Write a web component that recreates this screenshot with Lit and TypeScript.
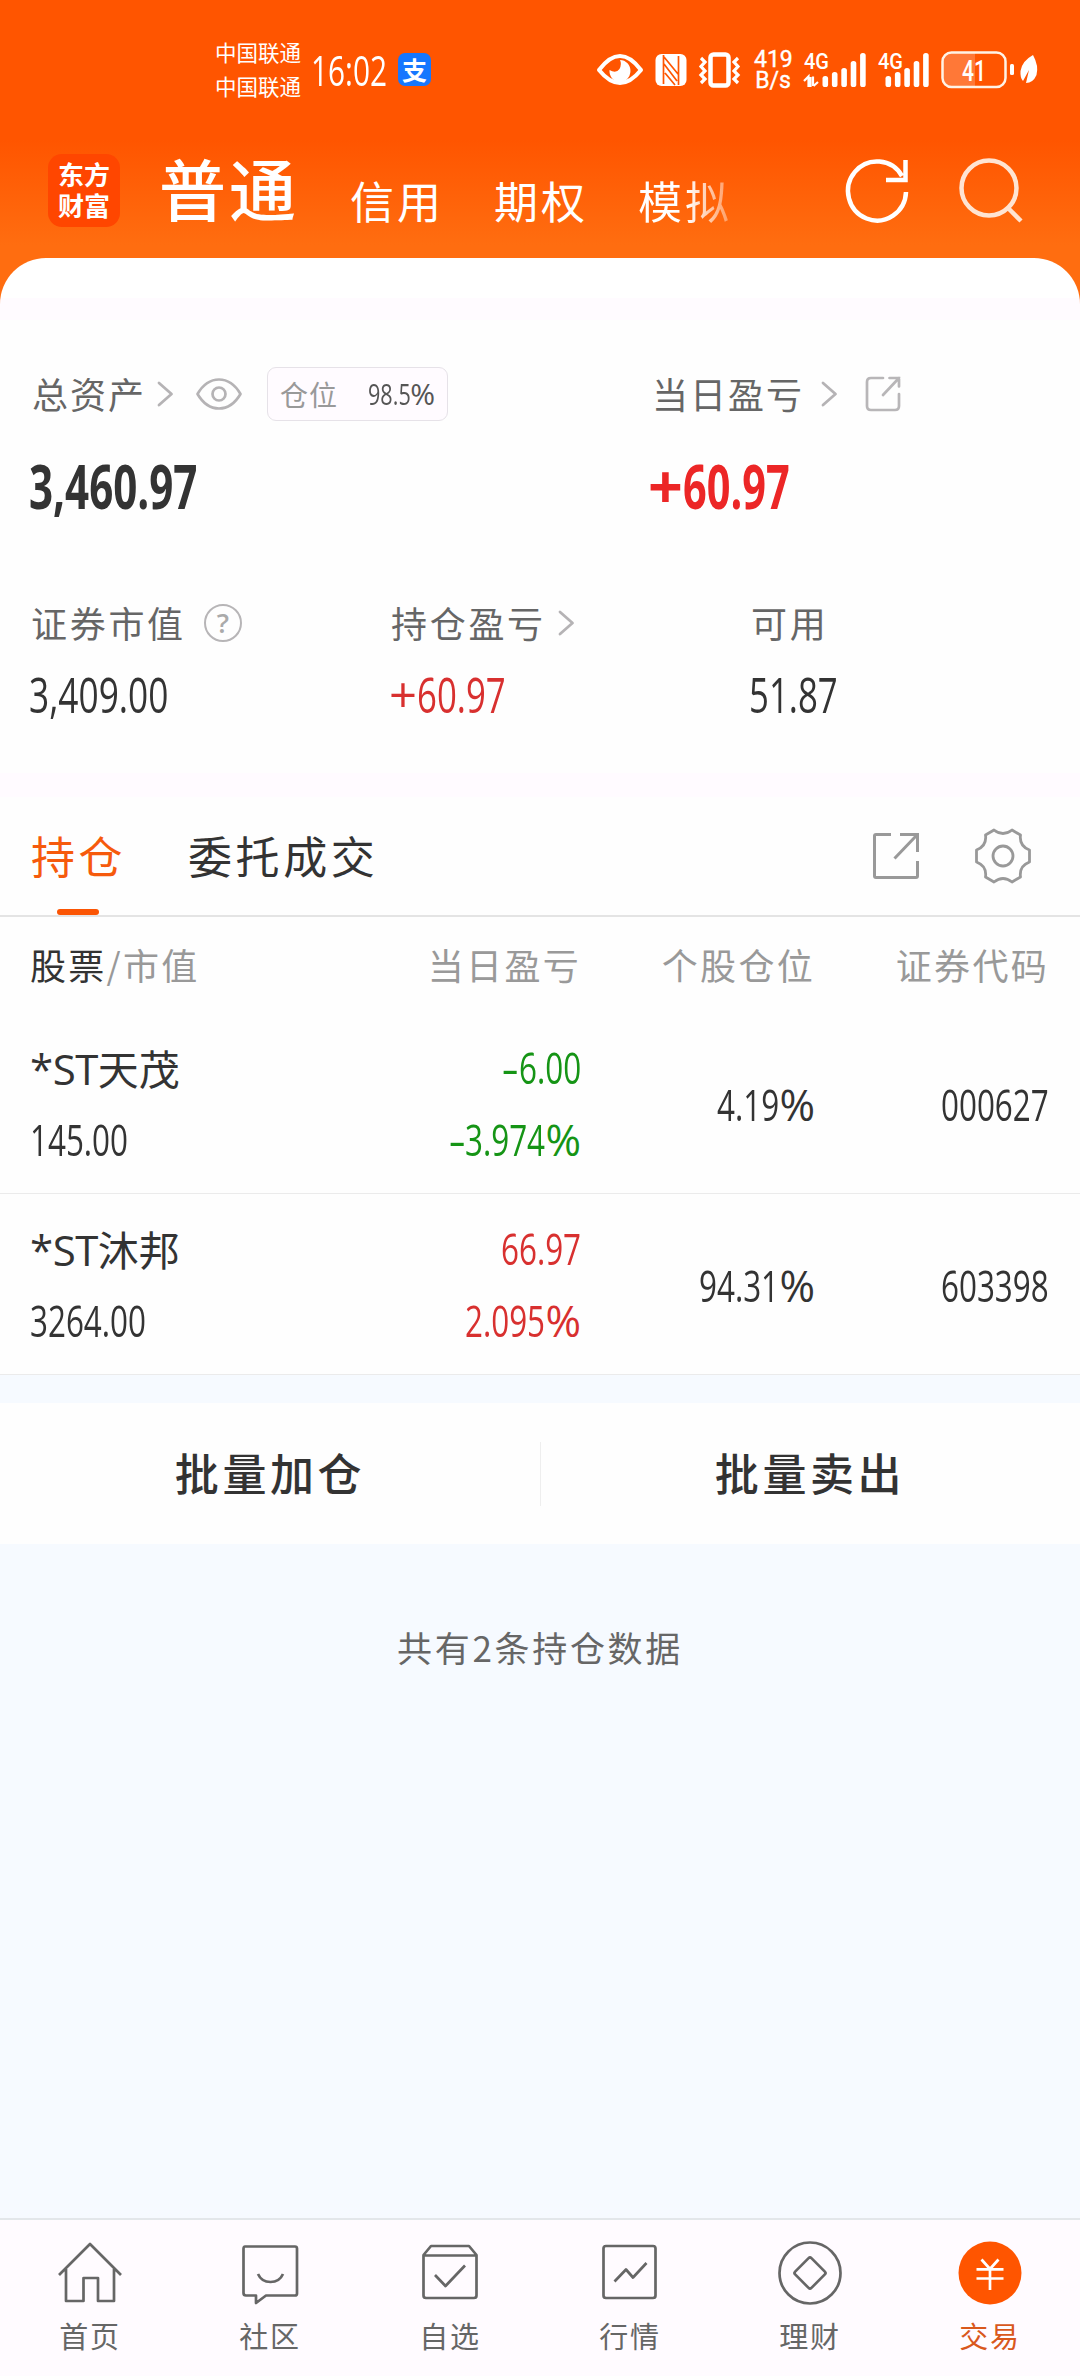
import { LitElement, html, css, svg, TemplateResult } from "lit";
import { customElement, property } from "lit/decorators.js";

/** Advance widths in em of the glyphs that are drawn condensed. */
const ADVANCE: Record<string, number> = { ".": 0.266, ",": 0.245, ":": 0.266 };

/** A figure whose digits are condensed while signs keep their full width. */
@customElement("slim-number")
export class SlimNumber extends LitElement {
  @property() value = "";
  @property({ type: Number }) ratio = 0.73;

  static styles = css`
    :host { display: inline-block; white-space: nowrap; font-family: "Open Sans", "Noto Sans", sans-serif; font-weight: 500; line-height: 1; }
    .run { display: inline-block; transform-origin: left center; }
    .minus { display: inline-block; transform: scaleX(1.25); transform-origin: right center; }
  `;

  render() {
    const runs = this.value.match(/[\d.,:]+|[^\d.,:]+/g) ?? [];
    return html`${runs.map((run) => {
      if (!/[\d]/.test(run)) return html`<span class=${run === "-" ? "minus" : ""}>${run}</span>`;
      const advance = [...run].reduce((sum, c) => sum + (ADVANCE[c] ?? 0.572), 0);
      return html`<span class="run" style="transform:scaleX(${this.ratio});margin-right:${(-advance * (1 - this.ratio)).toFixed(3)}em">${run}</span>`;
    })}`;
  }
}

const chevron = html`<svg class="chevron" width="18" height="28" viewBox="0 0 18 28" fill="none" stroke="#b5b3b5" stroke-width="2.8" stroke-linecap="round" stroke-linejoin="round"><path d="M3 3L15.500 14L3 25"/></svg>`;

const bars = (x: number) => svg`<g fill="#fff">
  <rect x=${x} y="24" width="5.600" height="11" rx="2.600"/><rect x=${x + 9.4} y="20" width="5.600" height="15" rx="2.600"/>
  <rect x=${x + 18.800} y="16" width="5.600" height="19" rx="2.600"/><rect x=${x + 28.200} y="9" width="5.600" height="26" rx="2.600"/>
  <rect x=${x + 37.600} y="1" width="5.600" height="34" rx="2.600"/></g>`;

interface Holding { name: string; value: string; gain: string; rate: string; up: boolean; share: string; code: string; }

const HOLDINGS: Holding[] = [
  { name: "*ST天茂", value: "145.00", gain: "-6.00", rate: "-3.974%", up: false, share: "4.19%", code: "000627" },
  { name: "*ST沐邦", value: "3264.00", gain: "66.97", rate: "2.095%", up: true, share: "94.31%", code: "603398" },
];

const NAV: { label: string; icon: TemplateResult; on?: boolean }[] = [
  { label: "首页", icon: html`<svg width="66" height="66" viewBox="0 0 66 66"><path d="M2 34L33 3L64 34M9 28V60H26.500V37H41V60H57V28"/></svg>` },
  { label: "社区", icon: html`<svg width="66" height="66" viewBox="0 0 66 66"><path d="M8 5.500H58Q60 5.500 60 7.500V52.500Q60 54.500 58 54.500H29L19 62V54.500H9Q6.500 54.500 6.500 52V8Q6.500 5.500 8 5.500ZM21 33Q24.500 41 33.500 41Q42.500 41 46 33"/></svg>` },
  { label: "自选", icon: html`<svg width="66" height="66" viewBox="0 0 66 66"><path d="M6.500 14L14 5H52L59.500 14V54.500Q59.500 57 57 57H9Q6.500 57 6.500 54.500ZM6.500 14.500H59.500M18 34L28.500 45L48 24.500"/></svg>` },
  { label: "行情", icon: html`<svg width="66" height="66" viewBox="0 0 66 66"><rect x="6.500" y="5" width="52" height="52" rx="2.500"/><path d="M17.500 40.500L29 28.500L36 36.500L49.500 22"/></svg>` },
  { label: "理财", icon: html`<svg width="66" height="66" viewBox="0 0 66 66"><circle cx="33" cy="32" r="30.500"/><rect x="21.500" y="20.500" width="23" height="23" rx="2" transform="rotate(45 33 32)"/></svg>` },
  { label: "交易", on: true, icon: html`<svg width="66" height="66" viewBox="0 0 66 66"><circle cx="33" cy="32" r="31.500" fill="#ff5500" stroke="none"/><path stroke="#fff" d="M24.500 18.500L33 28L41.500 18.500M19.500 28.300H46.500M19.500 37.500H46.500M33 28V49"/></svg>` },
];

@customElement("app-root")
export class AppRoot extends LitElement {
  static styles = css`
    :host { display: block; font-family: "Noto Sans CJK SC", sans-serif; color: #333; line-height: 1; }
    * { box-sizing: border-box; }
    svg { display: block; flex: none; overflow: visible; }
    .screen { width: 1080px; height: 2376px; display: flex; flex-direction: column; background: #f6faff; overflow: hidden; white-space: nowrap; }

    .top { height: 304px; margin-bottom: -46px; background: linear-gradient(#ff5500 0, #ff5500 140px, #ff6d10 245px, #ff6d10 100%); color: #fff; flex: none; }
    .status { height: 142px; display: flex; align-items: center; padding-left: 215px; }
    .carriers { display: flex; flex-direction: column; gap: 12px; font-size: 21.500px; width: 96px; padding-bottom: 5px; }
    .clock { font-size: 42px; width: 87px; padding-bottom: 3px; }
    .pay { width: 33px; height: 33px; border-radius: 7px; background: #1677ff; display: flex; align-items: center; justify-content: center; font-size: 25px; font-weight: 700; margin: 0 165px 3px 0; }
    .tray { display: flex; align-items: center; flex: none; padding-bottom: 3px; }
    .nfc, .vib { margin-left: 11px; }
    .rate { font: 400 23px/21px Roboto, sans-serif; -webkit-text-stroke: .4px #fff; width: 38px; text-align: center; margin: 0 12px 0 13px; }
    .net { font: 500 22px Roboto, sans-serif; }
    .net + .net { margin-left: 8px; }
    .batt { font: 500 30px Roboto, sans-serif; margin-left: 9px; }

    .head { height: 96px; display: flex; align-items: center; padding-left: 48px; }
    .logo { width: 72px; height: 73px; border-radius: 14px; background: #ff4600; display: flex; flex-direction: column; align-items: center; justify-content: center; font-size: 26px; line-height: 30px; font-weight: 700; }
    .logo span { height: 31px; }
    .tab-main { font-size: 67px; font-weight: 500; letter-spacing: 3px; width: 230px; padding: 0 0 7px 39px; }
    .tab { font-size: 44px; letter-spacing: 3px; width: 144px; padding-top: 19px; }
    .fade { width: 207px; }
    .fade span { background: linear-gradient(90deg, #fff 48px, rgba(255,255,255,.35) 92px); -webkit-background-clip: text; background-clip: text; color: transparent; }
    .head svg { margin-left: 1px; }
    .head svg + svg { margin-left: 48px; }

    .panel { height: 515px; flex: none; border-radius: 46px 46px 0 0; background: linear-gradient(#fff 0 40px, #fffbff 40px 62px, #fefefe 62px); padding: 0 31px; }
    .assets { display: grid; grid-template-columns: 617px 1fr; padding-top: 106px; }
    .label { display: flex; align-items: center; height: 60px; font-size: 36px; letter-spacing: 2px; color: #666; }
    .label > span { padding-bottom: 3px; }
    .label .chevron { margin-left: 10px; }
    .a1 { padding-left: 1px; }
    .a1 > .chevron { margin-left: 10px; }
    .a1 .eye { margin: 0 25px 0 22px; }
    .badge { width: 181px; height: 54px; border: 1px solid #e6e2e8; border-radius: 9px; background: #fffbff; display: flex; align-items: center; justify-content: space-between; padding: 0 12px; font-size: 28px; color: #999; letter-spacing: 1px; }
    .badge slim-number { font-size: 30px; color: #555; letter-spacing: 0; }
    .big { font-size: 61px; font-weight: 700; padding-top: 31px; height: 98px; margin-left: -2px; }
    .big.red { color: #ec2626; margin-left: 0; }
    .a2 { padding-left: 4px; }
    .a2 .chevron { margin-left: 16px; }
    .a2 .ext { margin-left: 27px; }
    .stats { display: grid; grid-template-columns: 360px 360px 1fr; padding-top: 74px; }
    .stats slim-number { font-size: 49px; padding-top: 20px; margin-left: -2px; }
    .stats .label { height: 54px; letter-spacing: 2.700px; }
    .stats .label .chevron { margin-left: 11px; }
    .q { width: 38px; height: 38px; border: 2.500px solid #b7b5b7; border-radius: 50%; color: #aaa; font: 600 27px/34px "Open Sans", sans-serif; text-align: center; margin-left: 18px; letter-spacing: 0; }
    .red { color: #d8302f; }
    .green { color: #159415; }

    .gap { height: 24px; background: #fffbff; flex: none; }
    .tabs { height: 120px; flex: none; background: #fefefe; border-bottom: 2px solid #e4e4e4; display: flex; padding: 0 49px 0 31px; font-size: 44px; letter-spacing: 3.600px; }
    .tabs .on { color: #f65a0c; display: flex; flex-direction: column; width: 157px; justify-content: space-between; }
    .tabs .t { height: 118px; line-height: 117px; }
    .tabs .on .t { height: 112px; }
    .bar { width: 42px; height: 6px; border-radius: 3px; background: #fb5504; margin-left: 26px; }
    .tools { margin-left: auto; display: flex; align-items: center; gap: 55px; }

    .grid { display: grid; grid-template-columns: 300px 251px 234px 234px; padding: 0 30px; background: #fefefe; flex: none; }
    .r { text-align: right; justify-self: end; }
    .cols { height: 96px; align-items: center; font-size: 36px; letter-spacing: 2.300px; color: #999; padding-bottom: 3px; }
    .cols b { font-weight: 400; color: #333; }
    .row { height: 181px; align-items: center; font-size: 43px; border-bottom: 1px solid #ebebeb; }
    .stack { display: flex; flex-direction: column; gap: 29px; padding-top: 1px; }
    .stack.r { align-items: flex-end; }
    .name { font-size: 41px; height: 43px; line-height: 43px; }
    .name i { font: 400 42px/1 "Open Sans", sans-serif; letter-spacing: -.5px; }
    .mid { padding-top: 1px; }

    .actions { margin-top: 28px; height: 141px; background: #fefefe; display: flex; align-items: center; flex: none; font-size: 44px; font-weight: 500; letter-spacing: 3.600px; }
    .actions div { width: 540px; text-align: center; padding-bottom: 3px; }
    .actions .sep { width: 1px; height: 64px; background: #eee; margin-right: -1px; }
    .note { text-align: center; font-size: 35px; letter-spacing: 2.700px; color: #666; padding-top: 85px; }

    .nav { margin-top: auto; height: 158px; background: #fffbff; border-top: 2px solid #e3e7ea; display: grid; grid-template-columns: repeat(6, 1fr); flex: none; color: #666; }
    .nav div { display: flex; flex-direction: column; align-items: center; padding-top: 21px; gap: 14px; font-size: 29px; letter-spacing: 1.700px; }
    .nav svg { fill: none; stroke: #666; stroke-width: 2.700; stroke-linejoin: round; }
    .nav .active { color: #d9581c; }
  `;

  render() {
    return html`<div class="screen">
      <div class="top">
        <div class="status">
          <div class="carriers"><span>中国联通</span><span>中国联通</span></div>
          <slim-number class="clock" value="16:02" ratio="0.71"></slim-number>
          <div class="pay">支</div>
          <div class="tray">
            <svg width="48" height="36" viewBox="0 0 48 36"><path d="M3 18Q24-10 45 18Q24 44 3 18Z" fill="none" stroke="#fff" stroke-width="4" stroke-linejoin="round"/><path d="M24 8A10.500 11 0 1 1 13.500 18Q20 22 23.500 17Q26 12 24 8Z" fill="#fff"/></svg>
            <svg class="nfc" width="32" height="34" viewBox="0 0 32 34"><rect x=".5" y="1" width="31" height="32" rx="6" fill="#fff"/><path d="M8.500 2V31M23.500 3V32M9 4L23 21M9 11L22 28M10 20L20 32" stroke="#ff5500" stroke-width="1.700" fill="none"/></svg>
            <svg class="vib" width="43" height="36" viewBox="0 0 43 36" fill="none" stroke="#fff"><rect x="12.500" y="2.500" width="18" height="31" rx="3" stroke-width="4.500"/><path d="M3 6L7 10L3 14.500L7 19L3 23L7 27L3 31M40 6L36 10L40 14.500L36 19L40 23L36 27L40 31" stroke-width="3.200"/></svg>
            <div class="rate">419<br>B/s</div>
            <svg class="net" width="66" height="38" viewBox="0 -1 66 38"><text x="0" y="17" fill="#fff" textLength="25" lengthAdjust="spacingAndGlyphs">4G</text><path d="M0 29L4.500 24.500V34H6.500V25M9 34V24.500M9.500 34L14 30" fill="none" stroke="#fff" stroke-width="2.200"/>${bars(18.500)}</svg>
            <svg class="net" width="54" height="38" viewBox="0 -1 54 38"><text x="0" y="17" fill="#fff" textLength="25" lengthAdjust="spacingAndGlyphs">4G</text>${bars(7.500)}</svg>
            <svg class="batt" width="100" height="38" viewBox="0 0 100 38"><path d="M10 2H34V35H10Q2 35 2 26V11Q2 2 10 2Z" fill="#ff7837"/><rect x="1.500" y="1.500" width="63" height="34.500" rx="9" fill="none" stroke="#fff3e6" stroke-width="2.500"/><text x="21" y="29.500" fill="#fff" textLength="24" lengthAdjust="spacingAndGlyphs">41</text><rect x="69" y="13" width="4" height="11" rx="1.500" fill="#fff"/><path d="M92 4Q81 10 79.500 20Q79 27 82 30L88 19L85 32Q92 32 95.500 24Q98 15 92 4Z" fill="#fff"/></svg>
          </div>
        </div>
        <div class="head">
          <div class="logo"><span>东方</span><span>财富</span></div>
          <div class="tab-main">普通</div>
          <div class="tab">信用</div><div class="tab">期权</div><div class="tab fade"><span>模拟</span></div>
          <svg width="64" height="66" viewBox="0 0 64 66" fill="none" stroke="#fff" stroke-width="4.500"><path d="M60 35A29 29.500 0 1 1 56 19M59.500 3V23H40"/></svg>
          <svg width="66" height="66" viewBox="0 0 66 66" fill="none" stroke="#ffe4d2" stroke-width="4.500"><circle cx="31" cy="31" r="27.500"/><path d="M50 51L63 64"/></svg>
        </div>
      </div>

      <div class="panel">
        <div class="assets">
          <div>
            <div class="label a1"><span>总资产</span>${chevron}
              <svg class="eye" width="46" height="34" viewBox="0 0 46 34" fill="none" stroke="#b5b3b5" stroke-width="2.700"><path d="M1.500 17Q10 2.500 23 2.500Q36 2.500 44.500 17Q36 31.500 23 31.500Q10 31.500 1.500 17Z" stroke-linejoin="round"/><circle cx="23" cy="17" r="6.500"/></svg>
              <div class="badge"><span>仓位</span><slim-number value="98.5%" ratio="0.72"></slim-number></div>
            </div>
            <slim-number class="big" value="3,460.97" ratio="0.69"></slim-number>
          </div>
          <div>
            <div class="label a2"><span>当日盈亏</span>${chevron}
              <svg class="ext" width="36" height="36" viewBox="0 0 36 36" fill="none" stroke="#b8b6b8" stroke-width="2.700" stroke-linecap="round"><path d="M18 2H6Q2 2 2 6V30Q2 34 6 34H30Q34 34 34 30V18M24.500 2H34V10.500M34 2L18 19"/></svg>
            </div>
            <slim-number class="big red" value="+60.97" ratio="0.68"></slim-number>
          </div>
        </div>
        <div class="stats">
          <div><div class="label"><span>证券市值</span><div class="q">?</div></div><slim-number value="3,409.00" ratio="0.72"></slim-number></div>
          <div><div class="label"><span>持仓盈亏</span>${chevron}</div><slim-number class="red" value="+60.97" ratio="0.71"></slim-number></div>
          <div><div class="label"><span>可用</span></div><slim-number value="51.87" ratio="0.71"></slim-number></div>
        </div>
      </div>
      <div class="gap"></div>

      <div class="tabs">
        <div class="on"><div class="t">持仓</div><div class="bar"></div></div>
        <div class="t">委托成交</div>
        <div class="tools">
          <svg width="48" height="48" viewBox="0 0 48 48" fill="none" stroke="#999" stroke-width="3"><path d="M19 2.500H4Q2.500 2.500 2.500 4V44Q2.500 45.500 4 45.500H44Q45.500 45.500 45.500 44V29M28 2.500H45.500V20M44 4L22.500 26.500"/></svg>
          <svg width="56" height="56" viewBox="0 0 56 56" fill="none" stroke="#999" stroke-width="2.800" stroke-linejoin="round"><circle cx="28" cy="28" r="10"/><path d="M19 2Q28 9 37 2L45.500 7Q44 18 54.500 22V34Q44 38 45.500 49L37 54Q28 47 19 54L10.500 49Q12 38 1.500 34V22Q12 18 10.500 7Z"/></svg>
        </div>
      </div>

      <div class="grid cols"><div><b>股票</b>/市值</div><div class="r">当日盈亏</div><div class="r">个股仓位</div><div class="r">证券代码</div></div>
      ${HOLDINGS.map((h) => html`<div class="grid row">
        <div class="stack"><div class="name"><i>${h.name.slice(0, 3)}</i>${h.name.slice(3)}</div><slim-number value=${h.value}></slim-number></div>
        <div class="stack r ${h.up ? "red" : "green"}"><slim-number value=${h.gain}></slim-number><slim-number value=${h.rate}></slim-number></div>
        <div class="r mid"><slim-number value=${h.share}></slim-number></div>
        <div class="r mid"><slim-number value=${h.code}></slim-number></div>
      </div>`)}

      <div class="actions"><div>批量加仓</div><div class="sep"></div><div>批量卖出</div></div>
      <div class="note">共有2条持仓数据</div>

      <div class="nav">${NAV.map((n) => html`<div class=${n.on ? "active" : ""}>${n.icon}<span>${n.label}</span></div>`)}</div>
    </div>`;
  }
}
